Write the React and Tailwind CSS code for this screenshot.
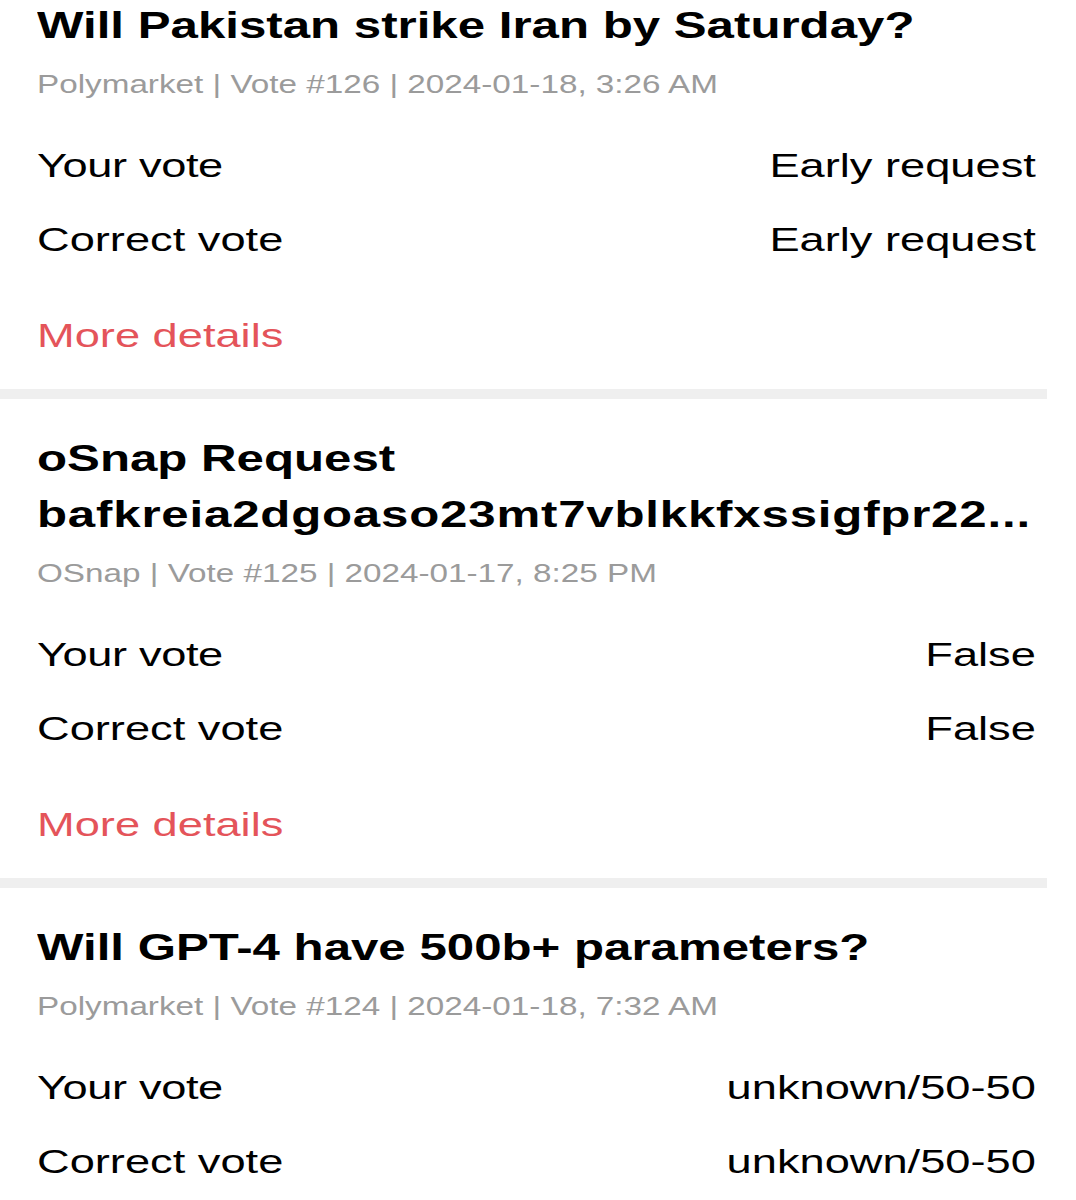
import React from 'react';

const votes = [
  {
    title: 'Will Pakistan strike Iran by Saturday?',
    meta: 'Polymarket | Vote #126 | 2024-01-18, 3:26 AM',
    yourVote: 'Early request',
    correctVote: 'Early request',
  },
  {
    title: 'oSnap Request',
    subtitle: 'bafkreia2dgoaso23mt7vblkkfxssigfpr22...',
    meta: 'OSnap | Vote #125 | 2024-01-17, 8:25 PM',
    yourVote: 'False',
    correctVote: 'False',
  },
  {
    title: 'Will GPT-4 have 500b+ parameters?',
    meta: 'Polymarket | Vote #124 | 2024-01-18, 7:32 AM',
    yourVote: 'unknown/50-50',
    correctVote: 'unknown/50-50',
  },
];

const VoteCard = ({ vote, last }) => (
  <div className={last ? '' : 'border-b-[10px] border-[#efefef]'}>
    <div className="pl-[37px] pt-[32px] pb-[34px]">
      <div className="w-[751px] origin-left scale-x-[1.33]">
        <h2 className="text-[37px] leading-[56px] font-bold text-black whitespace-nowrap">
          {vote.title}
          {vote.subtitle && <span className="block tracking-[0.6px]">{vote.subtitle}</span>}
        </h2>
        <p className="mt-[12px] text-[25px] leading-[36px] text-[#9b9b9b] whitespace-nowrap">
          {vote.meta}
        </p>
        <div className="mt-[26px] text-[34px] leading-[74px] text-black">
          <div className="flex justify-between">
            <span className="tracking-[-0.3px]">Your vote</span>
            <span>{vote.yourVote}</span>
          </div>
          <div className="flex justify-between">
            <span>Correct vote</span>
            <span>{vote.correctVote}</span>
          </div>
        </div>
        <button className="mt-[39px] block text-[34px] leading-[40px] text-[#e4545a] text-left">
          More details
        </button>
      </div>
    </div>
  </div>
);

export default function App() {
  return (
    <div
      className="bg-white h-[1200px] overflow-hidden"
      style={{ fontFamily: '"Liberation Sans", Arial, sans-serif' }}
    >
      <div className="w-[1047px] -mt-[34px]">
        {votes.map((v, i) => (
          <VoteCard key={i} vote={v} last={i === votes.length - 1} />
        ))}
      </div>
    </div>
  );
}
